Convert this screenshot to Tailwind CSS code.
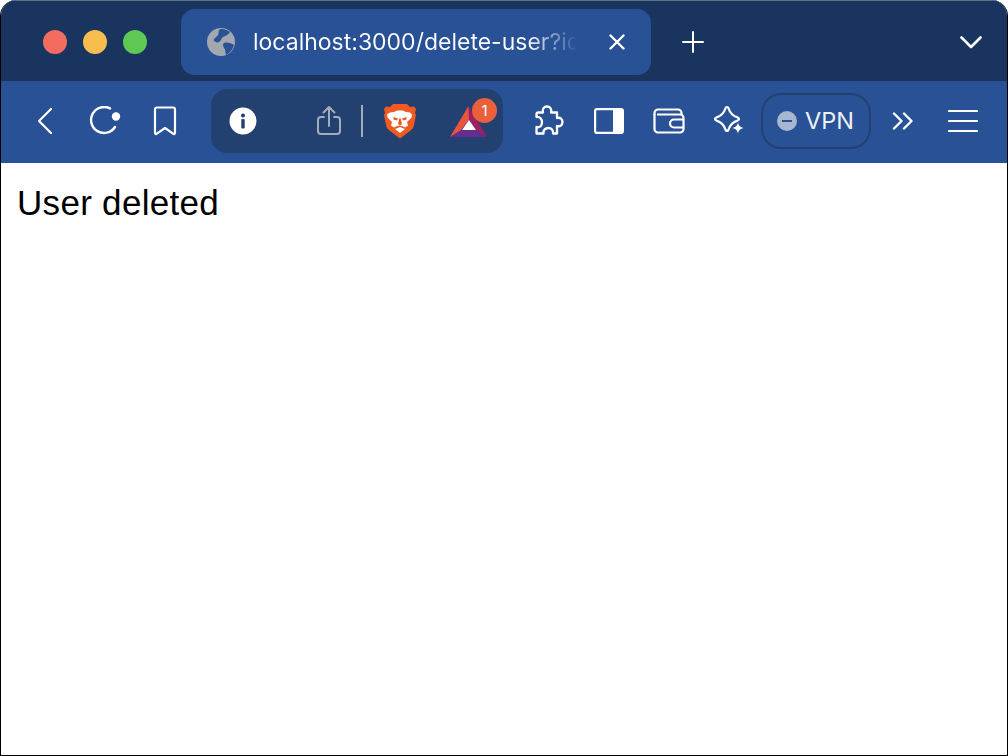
<!DOCTYPE html>
<html lang="en">
<head>
    <meta charset="UTF-8">
    <title>User deleted</title>
    <script src="https://cdn.jsdelivr.net/npm/@tailwindcss/browser@4"></script>
</head>
<body class="bg-white font-['Inter',sans-serif]">
    <div class="w-[1008px] h-[756px] border border-t-0 border-black rounded-t-[16px] overflow-hidden flex flex-col">
        <!-- title bar -->
        <div class="h-[81px] bg-[#1a3460] border-t border-[#5d7089] flex shrink-0">
            <div class="flex gap-4 pl-[42px] pt-[29px] w-[180px] shrink-0">
                <span class="w-6 h-6 rounded-full bg-[#f26d60]"></span>
                <span class="w-6 h-6 rounded-full bg-[#f7bd4f]"></span>
                <span class="w-6 h-6 rounded-full bg-[#5fc853]"></span>
            </div>
            <div class="mt-2 w-[470px] h-[66px] rounded-[14px] bg-[#285196] flex items-center pl-[26px] shrink-0">
                <svg class="w-[28px] h-[28px] shrink-0" viewBox="0 0 28 28">
                    <circle cx="14" cy="14" r="14" fill="#a3a8b0"/>
                    <path d="M13 1C17 .5 21 2 23 4 21 7 18 8 16 9 14 10 15 12 12 14 10 15 8 14 6.500 12 7 10 10 9 11 7 12 5 11 3 13 1zM17 15C20 14 24 15 27 17 26 21 23 25 19 27 18 24 19 22 17 20 16 18 15.500 16 17 15z" fill="#285196"/>
                </svg>
                <span class="ml-[18px] w-[325px] text-[23px] leading-[30px] whitespace-nowrap overflow-hidden bg-linear-to-r from-white from-[84%] to-transparent to-[100%] bg-clip-text text-transparent">localhost:3000/delete-user?id=1</span>
                <svg class="ml-[31px] w-4 h-4 shrink-0" viewBox="0 0 16 16" fill="none" stroke="#fff" stroke-width="2.400" stroke-linecap="round"><path d="M1.500 1.500l13 13M14.500 1.500l-13 13"/></svg>
            </div>
            <svg class="ml-[31px] mt-[30px] w-[22px] h-[22px] shrink-0" viewBox="0 0 22 22" fill="none" stroke="#fff" stroke-width="2" stroke-linecap="round"><path d="M11 1v20M1 11h20"/></svg>
            <svg class="ml-[256px] mt-[34px] w-[22px] h-[14px] shrink-0" viewBox="0 0 22 14" fill="none" stroke="#fff" stroke-width="2.600" stroke-linecap="round" stroke-linejoin="round"><path d="M1.500 2.500L11 12l9.500-9.500"/></svg>
        </div>
        <!-- toolbar -->
        <div class="h-[82px] bg-[#285196] flex items-center pl-[14px] pb-[2px] shrink-0">
            <button class="w-[60px] flex justify-center">
                <svg class="w-[16px] h-[28px]" viewBox="0 0 16 28" fill="none" stroke="#fff" stroke-width="2.200" stroke-linecap="round" stroke-linejoin="round"><path d="M14 2L2 14l12 12"/></svg>
            </button>
            <button class="w-[60px] flex justify-center">
                <svg class="w-[32px] h-[30px]" viewBox="0 0 32 30" fill="none" stroke="#fff" stroke-width="2.400" stroke-linecap="round"><path d="M21 2.400A13 13 0 1 0 26 21"/><circle cx="27" cy="10.500" r="4.200" fill="#fff" stroke="none"/></svg>
            </button>
            <button class="w-[60px] flex justify-center">
                <svg class="w-[24px] h-[30px]" viewBox="0 0 24 30" fill="none" stroke="#fff" stroke-width="2.200" stroke-linejoin="round"><path d="M4 1.500h16a2 2 0 0 1 2 2V27a1 1 0 0 1-1.600.8L12 22l-8.400 5.800A1 1 0 0 1 2 27V3.500a2 2 0 0 1 2-2z"/></svg>
            </button>
            <!-- address pill -->
            <div class="ml-4 w-[292px] h-[64px] rounded-[16px] bg-[#234170] flex items-center shrink-0">
                <svg class="ml-[18px] w-[28px] h-[28px] shrink-0" viewBox="0 0 28 28"><circle cx="14" cy="14" r="13.500" fill="#fff"/><circle cx="14" cy="8.500" r="2" fill="#234170"/><rect x="12.300" y="12" width="3.400" height="9.500" rx="1" fill="#234170"/></svg>
                <svg class="ml-[59px] w-[26px] h-[32px] shrink-0" viewBox="0 0 26 32" fill="none" stroke="#a3acb9" stroke-width="2" stroke-linecap="round" stroke-linejoin="round"><path d="M8 12H5a3 3 0 0 0-3 3v11a3 3 0 0 0 3 3h16a3 3 0 0 0 3-3V15a3 3 0 0 0-3-3h-3M13 21V2M7.500 7.500L13 2l5.500 5.500"/></svg>
                <span class="ml-[19px] w-[2px] h-[32px] bg-[#a3acb9] shrink-0"></span>
                <svg class="ml-[21px] w-[32px] h-[36px] shrink-0" viewBox="0 0 32 36">
                    <path d="M9 1h14l3 3 4-.5 2 2.500-1 4 1 2-2 10c-.5 3-2 4.500-4 6l-8 6-2 1.500-2-1.500-8-6c-2-1.500-3.500-3-4-6L0 12l1-2-1-4 2-2.500L6 4z" fill="#f05a22"/>
                    <path d="M6 9.500c3 0 5.500-1 7-2h6c1.500 1 4 2 7 2l2 2-.5 3-4.500 4.500 1 3.500-3 2-3-1.500-2.500-.5-2.500.5-3 1.500-3-2 1-3.500-4.500-4.500-.5-3z" fill="#fff"/>
                    <path d="M9.500 14l4.500 1.500-1 2-3.500-1zM22.500 14L18 15.500l1 2 3.500-1zM14 21l2 1.500 2-1.500-1.500-6h-1z" fill="#f05a22"/>
                    <path d="M11 26l5-2 5 2-5 4z" fill="#fff"/>
                </svg>
                <div class="ml-[34px] relative w-[37px] h-[31px] shrink-0">
                    <svg class="w-[37px] h-[31px]" viewBox="0 0 37 31">
                        <path d="M0 31h37l-11-7H11z" fill="#662d91"/>
                        <path d="M18.500 0L37 31l-11-7-7-10z" fill="#9e1f63"/>
                        <path d="M18.500 0L0 31l11-7 8-10z" fill="#e9543c"/>
                        <path d="M19 14l7 10H12z" fill="#fff"/>
                    </svg>
                    <span class="absolute left-[22px] top-[-8px] w-[25px] h-[25px] rounded-full bg-[#e9603a] text-white text-[15px] leading-[25px] text-center">1</span>
                </div>
            </div>
            <button class="ml-[15px] w-[60px] flex justify-center">
                <svg class="w-[32px] h-[32px]" viewBox="0 0 32 32" fill="none" stroke="#fff" stroke-width="2.300" stroke-linejoin="round"><path d="M6.500 7.500H11C10 4 12 1.500 15 1.500S20 4 19 7.500H25V13C28 12 30.500 14 30.500 17S28 22 25 21V28.500H21C21.500 25 19.500 23 16.500 23S11 25 11.500 28.500H4.500V22C7.500 23 10 21 10 17.500S7.500 11 4.500 12V9.500A2 2 0 0 1 6.500 7.500z"/></svg>
            </button>
            <button class="ml-[1px] w-[60px] flex justify-center">
                <svg class="w-[30px] h-[26px]" viewBox="0 0 30 26"><rect x="1.100" y="1.100" width="27.800" height="23.800" rx="2" fill="none" stroke="#fff" stroke-width="2.200"/><path d="M19 1h8a2 2 0 0 1 2 2v20a2 2 0 0 1-2 2h-8z" fill="#fff"/></svg>
            </button>
            <button class="w-[60px] flex justify-center">
                <svg class="w-[32px] h-[26px]" viewBox="0 0 32 26" fill="none" stroke="#fff" stroke-width="2.200" stroke-linejoin="round"><path d="M1.500 7V5a3.500 3.500 0 0 1 3.500-3.500h20A3.500 3.500 0 0 1 28.500 5v2"/><path d="M1.500 6v15a3.500 3.500 0 0 0 3.500 3.500h22a3.500 3.500 0 0 0 3.500-3.500V10A3.500 3.500 0 0 0 27 6.500H4"/><path d="M30 11.500H21a4 4 0 0 0 0 8h9"/></svg>
            </button>
            <button class="w-[60px] flex justify-center">
                <svg class="w-[32px] h-[32px]" viewBox="0 0 32 32"><path d="M14 2Q15 2 15.600 3.500C17 8 20 11 24.500 12.400Q26 13 26 14T24.500 15.600C20 17 17 20 15.600 24.500Q15 26 14 26T12.400 24.500C11 20 8 17 3.500 15.600Q2 15 2 14T3.500 12.400C8 11 11 8 12.400 3.500Q13 2 14 2z" fill="none" stroke="#fff" stroke-width="2.200" stroke-linejoin="round"/><path d="M25 17.500c.9 3.600 2 4.700 6 5.500-4 .8-5.100 1.900-6 5.500-.9-3.600-2-4.700-6-5.500 4-.8 5.100-1.900 6-5.500z" fill="#fff"/></svg>
            </button>
            <div class="ml-[2px] w-[110px] h-[56px] rounded-[20px] border-2 border-[#234170] flex items-center pl-[14px] shrink-0">
                <span class="w-5 h-5 rounded-full bg-[#a9b6cf] flex items-center justify-center shrink-0"><span class="w-[10px] h-[2px] bg-[#285196]"></span></span>
                <span class="ml-[8px] text-[23.500px] leading-none text-[#eef1f6]">VPN</span>
            </div>
            <button class="ml-[2px] w-[60px] flex justify-center">
                <svg class="w-[22px] h-[18px]" viewBox="0 0 22 18" fill="none" stroke="#fff" stroke-width="2.400" stroke-linecap="round" stroke-linejoin="round"><path d="M2 1.500L9.500 9 2 16.500M12 1.500L19.500 9 12 16.500"/></svg>
            </button>
            <button class="w-[60px] flex justify-center">
                <svg class="w-[30px] h-[24px]" viewBox="0 0 30 24" fill="none" stroke="#fff" stroke-width="2.200" stroke-linecap="round"><path d="M1 2h28M1 12h28M1 22h28"/></svg>
            </button>
        </div>
        <!-- page -->
        <div class="flex-1 bg-white pl-[16px] pt-[20px]">
            <p class="text-[35px] leading-[40px] text-black font-['Liberation_Sans',sans-serif] tracking-[0.300px]">User deleted</p>
        </div>
    </div>
</body>
</html>
